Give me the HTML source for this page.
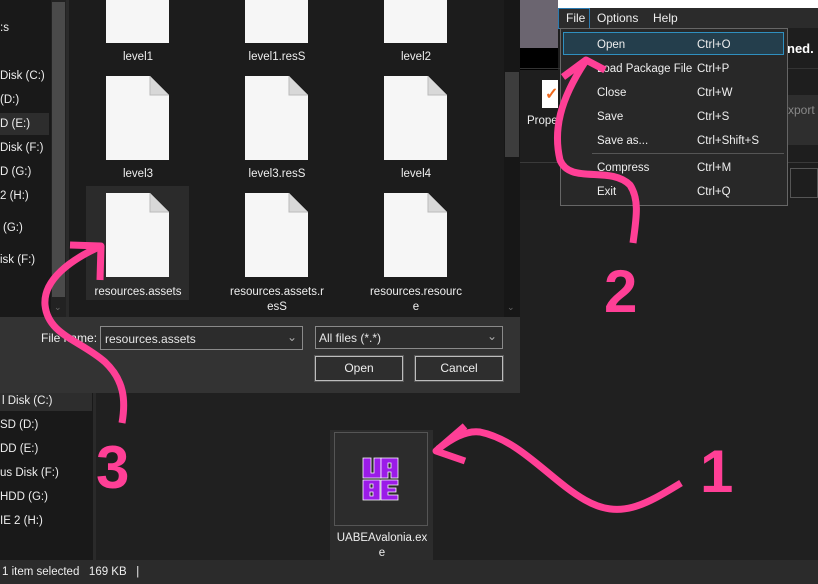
<!DOCTYPE html>
<html><head><style>
*{margin:0;padding:0;box-sizing:border-box}
body{width:818px;height:584px;background:#202020;position:relative;overflow:hidden;font-family:"Liberation Sans",sans-serif;font-size:12px;color:#e6e6e6}
.a{position:absolute}
.fi{position:absolute;width:63px;height:84px}
.lbl{position:absolute;width:120px;text-align:center;font-size:11.5px;color:#eee;line-height:15px}
.nav{position:absolute;font-size:11.5px;color:#eee}
.mi{position:absolute;left:597px;font-size:11.5px;color:#eee}
.ms{position:absolute;left:697px;font-size:11.5px;color:#eee}
.btn{position:absolute;border:1px solid #bdbdbd;outline:1px solid #555;background:#2e2e2e;text-align:center;color:#eee;font-size:12px}
</style></head><body>
<!-- explorer bottom -->
<div class="a" style="left:0;top:393px;width:94px;height:167px;background:#191919"></div>
<div class="a" style="left:0;top:393px;width:92px;height:18px;background:#2d2d2d"></div>
<div class="a" style="left:93px;top:393px;width:3px;height:167px;background:#2a2a2a"></div>
<div class="nav" style="left:2px;top:395px">l Disk (C:)</div>
<div class="nav" style="left:0;top:419px">SD (D:)</div>
<div class="nav" style="left:0;top:443px">DD (E:)</div>
<div class="nav" style="left:0;top:467px">us Disk (F:)</div>
<div class="nav" style="left:0;top:491px">HDD (G:)</div>
<div class="nav" style="left:0;top:515px">IE 2 (H:)</div>
<div class="a" style="left:330px;top:430px;width:103px;height:130px;background:#2c2c2c"></div>
<div class="a" style="left:334px;top:432px;width:94px;height:94px;border:1px solid #555"></div>
<svg class="a" style="left:362px;top:457px" width="38" height="44" viewBox="0 0 38 44">
<g fill="#9b1be8" stroke="#fff" stroke-width="0.8">
<path d="M1 1h8v15h3V1h7v20H1z"/><path d="M19 1h17v20h-7v-6h-3v6h-7zM26 6v5h3V6z"/>
<path d="M1 23h17v20H1zM8 27v4h3v-4zM8 35v4h3v-4z"/><path d="M19 23h17v5h-10v3h8v4h-8v3h10v5H19z"/>
</g></svg>
<div class="lbl" style="left:322px;top:531px;width:120px;font-size:11.5px">UABEAvalonia.ex<br>e</div>
<div class="a" style="left:0;top:560px;width:818px;height:24px;background:#2b2b2b"></div>
<div class="a" style="left:2px;top:566px;font-size:11.5px;color:#eee">1 item selected&nbsp;&nbsp; 169 KB &nbsp;&nbsp;|</div>

<!-- UABE window -->
<div class="a" style="left:520px;top:0;width:298px;height:200px;background:#1e1e1e"></div>
<div class="a" style="left:520px;top:0;width:38px;height:48px;background:#6b6570"></div>
<div class="a" style="left:520px;top:48px;width:38px;height:22px;background:#000"></div>
<div class="a" style="left:558px;top:0;width:260px;height:8px;background:#fff"></div>
<div class="a" style="left:558px;top:8px;width:260px;height:20px;background:#2b2b2b"></div>
<div class="a" style="left:558px;top:8px;width:32px;height:21px;border:1px solid #2a7ab0;background:#2b2b2b"></div>
<div class="a" style="left:566px;top:11px;color:#eee;font-size:12px">File</div>
<div class="a" style="left:597px;top:11px;color:#eee;font-size:12px">Options</div>
<div class="a" style="left:653px;top:11px;color:#eee;font-size:12px">Help</div>
<div class="a" style="left:787px;top:41px;color:#fff;font-weight:bold;font-size:13px">ned.</div>
<div class="a" style="left:520px;top:68px;width:298px;height:1px;background:#333"></div>
<div class="a" style="left:503px;top:70px;width:17px;height:90px;background:#4a4a4a"></div>
<div class="a" style="left:542px;top:80px;width:16px;height:28px;background:#fff"></div>
<div class="a" style="left:545px;top:84px;color:#f06a1e;font-size:16px;font-weight:bold">&#10003;</div>
<div class="a" style="left:527px;top:115px;color:#eee;font-size:11.5px">Prope</div>
<div class="a" style="left:787px;top:95px;width:31px;height:50px;background:#2e2e2e"></div>
<div class="a" style="left:788px;top:103px;color:#888;font-size:12px">xport</div>
<div class="a" style="left:520px;top:162px;width:298px;height:1px;background:#3a3a3a"></div>
<div class="a" style="left:790px;top:168px;width:28px;height:30px;border:1px solid #555"></div>
<div class="a" style="left:560px;top:28px;width:228px;height:178px;background:#282828;border:1px solid #666"></div>
<div class="a" style="left:563px;top:32px;width:221px;height:23px;background:#243e4c;border:1px solid #2f8fbf"></div>
<div class="mi" style="top:39px">Open</div><div class="ms" style="top:39px">Ctrl+O</div>
<div class="mi" style="top:63px">Load Package File</div><div class="ms" style="top:63px">Ctrl+P</div>
<div class="mi" style="top:87px">Close</div><div class="ms" style="top:87px">Ctrl+W</div>
<div class="mi" style="top:111px">Save</div><div class="ms" style="top:111px">Ctrl+S</div>
<div class="mi" style="top:135px">Save as...</div><div class="ms" style="top:135px">Ctrl+Shift+S</div>
<div class="a" style="left:592px;top:153px;width:192px;height:1px;background:#555"></div>
<div class="mi" style="top:162px">Compress</div><div class="ms" style="top:162px">Ctrl+M</div>
<div class="mi" style="top:186px">Exit</div><div class="ms" style="top:186px">Ctrl+Q</div>

<!-- dialog -->
<div class="a" style="left:0;top:0;width:520px;height:393px;background:#1c1c1c"></div>
<div class="a" style="left:0;top:0;width:66px;height:317px;background:#191919"></div>
<div class="a" style="left:0;top:113px;width:49px;height:22px;background:#2d2d2d"></div>
<div class="a" style="left:51px;top:0;width:15px;height:317px;background:#222"></div>
<div class="a" style="left:52px;top:2px;width:13px;height:295px;background:#4a4a4a"></div>
<div class="a" style="left:66px;top:0;width:3px;height:317px;background:#2a2a2a"></div>
<div class="nav" style="left:0;top:22px">:s</div>
<div class="nav" style="left:0;top:70px">Disk (C:)</div>
<div class="nav" style="left:0;top:94px">(D:)</div>
<div class="nav" style="left:0;top:118px">D (E:)</div>
<div class="nav" style="left:0;top:142px">Disk (F:)</div>
<div class="nav" style="left:0;top:166px">D (G:)</div>
<div class="nav" style="left:0;top:190px">2 (H:)</div>
<div class="nav" style="left:3px;top:222px">(G:)</div>
<div class="nav" style="left:0;top:254px">isk (F:)</div>
<div class="a" style="left:504px;top:0;width:16px;height:317px;background:#171717"></div>
<div class="a" style="left:505px;top:72px;width:14px;height:85px;background:#3d3d3d"></div>
<div class="a" style="left:86px;top:186px;width:103px;height:114px;background:#2b2b2b"></div>
<svg width="0" height="0" style="position:absolute"><defs><symbol id="f" viewBox="0 0 63 84"><path d="M0 0h44l19 19v65H0z" fill="#f6f6f6"/><path d="M44 0v19h19z" fill="#d8d8d8"/><path d="M44 0v19h19" fill="none" stroke="#bbb"/></symbol></defs></svg>
<svg class="fi" style="left:106px;top:-41px"><use href="#f"/></svg>
<svg class="fi" style="left:245px;top:-41px"><use href="#f"/></svg>
<svg class="fi" style="left:384px;top:-41px"><use href="#f"/></svg>
<svg class="fi" style="left:106px;top:76px"><use href="#f"/></svg>
<svg class="fi" style="left:245px;top:76px"><use href="#f"/></svg>
<svg class="fi" style="left:384px;top:76px"><use href="#f"/></svg>
<svg class="fi" style="left:106px;top:193px"><use href="#f"/></svg>
<svg class="fi" style="left:245px;top:193px"><use href="#f"/></svg>
<svg class="fi" style="left:384px;top:193px"><use href="#f"/></svg>
<div class="lbl" style="left:78px;top:50px">level1</div>
<div class="lbl" style="left:217px;top:50px">level1.resS</div>
<div class="lbl" style="left:356px;top:50px">level2</div>
<div class="lbl" style="left:78px;top:167px">level3</div>
<div class="lbl" style="left:217px;top:167px">level3.resS</div>
<div class="lbl" style="left:356px;top:167px">level4</div>
<div class="lbl" style="left:78px;top:285px">resources.assets</div>
<div class="lbl" style="left:217px;top:285px">resources.assets.r<br>esS</div>
<div class="lbl" style="left:356px;top:285px">resources.resourc<br>e</div>
<div class="a" style="left:54px;top:302px;color:#666;font-size:9px">&#8964;</div>
<div class="a" style="left:507px;top:302px;color:#666;font-size:9px">&#8964;</div>
<div class="a" style="left:0;top:317px;width:520px;height:76px;background:#333"></div>
<div class="a" style="left:41px;top:331px;color:#eee;font-size:12px">File name:</div>
<div class="a" style="left:100px;top:326px;width:203px;height:24px;border:1px solid #8a8a8a;background:#2c2c2c;padding:5px 4px;font-size:12px">resources.assets<span style="position:absolute;right:5px;top:3px;color:#aaa">&#8964;</span></div>
<div class="a" style="left:315px;top:326px;width:188px;height:23px;border:1px solid #8a8a8a;background:#2c2c2c;padding:4px 3px;font-size:12px">All files (*.*)<span style="position:absolute;right:5px;top:2px;color:#aaa">&#8964;</span></div>
<div class="btn" style="left:315px;top:356px;width:88px;height:25px;line-height:23px">Open</div>
<div class="btn" style="left:415px;top:356px;width:88px;height:25px;line-height:23px">Cancel</div>

<!-- arrows -->
<svg class="a" style="left:0;top:0" width="818" height="584">
<g fill="none" stroke="#ff3f96" stroke-width="7" stroke-linecap="butt" stroke-linejoin="round">
<path d="M681 483 C645 505 620 520 585 500 C550 480 520 440 480 432 C465 430 450 440 438 449"/>
<path d="M465 426 L436 451 L465 461"/>
<path d="M633 243 C636 220 640 200 630 185 C610 165 570 185 560 160 C553 130 560 100 585 62"/>
<path d="M563 77 L586 60 L605 70"/>
<path d="M122 423 C126 400 124 380 105 362 C80 340 48 335 45 305 C43 280 70 260 101 246"/>
<path d="M70 245 L101 246 L100 280"/>
</g>
<g fill="#ff3f96" font-family="Liberation Sans,sans-serif" font-weight="bold" font-size="60">
<text x="700" y="492">1</text>
<text x="604" y="312">2</text>
<text x="96" y="488">3</text>
</g>
</svg>
</body></html>
